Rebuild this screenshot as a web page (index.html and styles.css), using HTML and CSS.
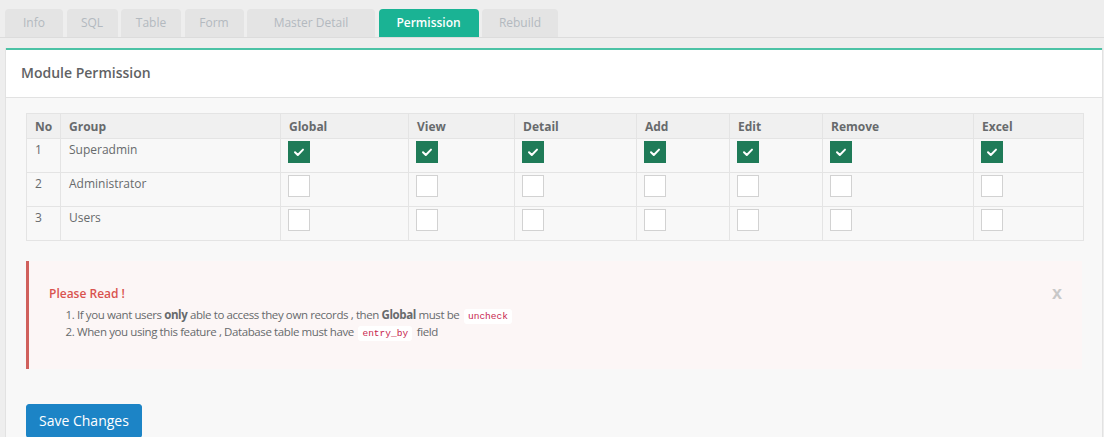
FILE: index.html
```html
<!DOCTYPE html>
<html lang="en">
<head>
<meta charset="utf-8">
<title>Module Permission</title>
<link rel="stylesheet" href="styles.css">
</head>
<body>
<ul class="tabs">
  <li class="tab t-info">Info</li>
  <li class="tab t-sql">SQL</li>
  <li class="tab t-table">Table</li>
  <li class="tab t-form">Form</li>
  <li class="tab t-md">Master Detail</li>
  <li class="tab t-perm active">Permission</li>
  <li class="tab t-rebuild">Rebuild</li>
</ul>
<div class="panel">
  <div class="panel-head">Module Permission</div>
  <div class="panel-body">
    <table class="perm">
      <colgroup>
        <col class="c-no"><col class="c-group"><col class="c-global"><col class="c-view"><col class="c-detail"><col class="c-add"><col class="c-edit"><col class="c-remove"><col class="c-excel">
      </colgroup>
      <thead>
        <tr><th>No</th><th>Group</th><th>Global</th><th>View</th><th>Detail</th><th>Add</th><th>Edit</th><th>Remove</th><th>Excel</th></tr>
      </thead>
      <tbody>
        <tr>
          <td>1</td><td>Superadmin</td>
          <td class="cb"><span class="box on"><svg viewBox="0 0 22 22" width="22" height="22"><path d="M7 11.2 L9.8 14 L15 8.6" fill="none" stroke="#fff" stroke-width="2" stroke-linecap="round" stroke-linejoin="round"/></svg></span></td>
          <td class="cb"><span class="box on"><svg viewBox="0 0 22 22" width="22" height="22"><path d="M7 11.2 L9.8 14 L15 8.6" fill="none" stroke="#fff" stroke-width="2" stroke-linecap="round" stroke-linejoin="round"/></svg></span></td>
          <td class="cb"><span class="box on"><svg viewBox="0 0 22 22" width="22" height="22"><path d="M7 11.2 L9.8 14 L15 8.6" fill="none" stroke="#fff" stroke-width="2" stroke-linecap="round" stroke-linejoin="round"/></svg></span></td>
          <td class="cb"><span class="box on"><svg viewBox="0 0 22 22" width="22" height="22"><path d="M7 11.2 L9.8 14 L15 8.6" fill="none" stroke="#fff" stroke-width="2" stroke-linecap="round" stroke-linejoin="round"/></svg></span></td>
          <td class="cb"><span class="box on"><svg viewBox="0 0 22 22" width="22" height="22"><path d="M7 11.2 L9.8 14 L15 8.6" fill="none" stroke="#fff" stroke-width="2" stroke-linecap="round" stroke-linejoin="round"/></svg></span></td>
          <td class="cb"><span class="box on"><svg viewBox="0 0 22 22" width="22" height="22"><path d="M7 11.2 L9.8 14 L15 8.6" fill="none" stroke="#fff" stroke-width="2" stroke-linecap="round" stroke-linejoin="round"/></svg></span></td>
          <td class="cb"><span class="box on"><svg viewBox="0 0 22 22" width="22" height="22"><path d="M7 11.2 L9.8 14 L15 8.6" fill="none" stroke="#fff" stroke-width="2" stroke-linecap="round" stroke-linejoin="round"/></svg></span></td>
        </tr>
        <tr>
          <td>2</td><td>Administrator</td>
          <td class="cb"><span class="box"></span></td>
          <td class="cb"><span class="box"></span></td>
          <td class="cb"><span class="box"></span></td>
          <td class="cb"><span class="box"></span></td>
          <td class="cb"><span class="box"></span></td>
          <td class="cb"><span class="box"></span></td>
          <td class="cb"><span class="box"></span></td>
        </tr>
        <tr>
          <td>3</td><td>Users</td>
          <td class="cb"><span class="box"></span></td>
          <td class="cb"><span class="box"></span></td>
          <td class="cb"><span class="box"></span></td>
          <td class="cb"><span class="box"></span></td>
          <td class="cb"><span class="box"></span></td>
          <td class="cb"><span class="box"></span></td>
          <td class="cb"><span class="box"></span></td>
        </tr>
      </tbody>
    </table>

    <div class="alert">
      <span class="close">x</span>
      <div class="alert-title">Please Read !</div>
      <ol class="alert-list">
        <li>If you want users <b>only</b> able to access they own records , then <b>Global</b> must be <code>uncheck</code></li>
        <li>When you using this feature , Database table must have <code>entry_by</code> field</li>
      </ol>
    </div>

    <button class="btn" type="button">Save Changes</button>
  </div>
</div>
</body>
</html>
```

FILE: styles.css
```css
html, body {
  margin: 0;
  padding: 0;
  background: #eeeeee;
  font-family: "Open Sans", "Liberation Sans", sans-serif;
  color: #676a6c;
  overflow: hidden;
}

.tabs {
  list-style: none;
  margin: 0;
  padding: 9px 0 0 5px;
  display: flex;
  gap: 3.5px;
  border-bottom: 1px solid #dcdcdc;
}

.tab {
  height: 28px;
  line-height: 28px;
  text-align: center;
  font-size: 12px;
  color: #b3b9bf;
  background: #e4e4e4;
  border-radius: 4px 4px 0 0;
}

.t-info { width: 58px; }
.t-sql { width: 51px; }
.t-table { width: 60px; }
.t-form { width: 59px; }
.t-md { width: 128px; }
.t-perm { width: 100px; }
.t-rebuild { width: 76px; }

.tab.active {
  background: #1ab394;
  color: #ffffff;
  font-weight: 600;
}

.panel {
  margin: 10px 1px 0 5px;
  border-left: 1px solid #e2e2e2;
  border-right: 1px solid #e2e2e2;
}

.panel-head {
  background: #ffffff;
  border-top: 2px solid #4cc2a5;
  border-bottom: 1px solid #e2e2e2;
  height: 47px;
  line-height: 46px;
  padding-left: 15px;
  font-size: 14px;
  font-weight: 600;
  color: #5f6264;
}

.panel-body {
  background: #f8f8f8;
  padding: 15px 20px 20px 20px;
  min-height: 330px;
}

.perm {
  width: 1057px;
  border-collapse: collapse;
  table-layout: fixed;
  font-size: 12px;
  border: 1px solid #e4e4e4;
}

.c-no { width: 34px; }
.c-group { width: 220px; }
.c-global { width: 128px; }
.c-view { width: 106px; }
.c-detail { width: 122px; }
.c-add { width: 93px; }
.c-edit { width: 93px; }
.c-remove { width: 151px; }
.c-excel { width: 110px; }

.perm th {
  background: #f0f0f0;
  text-align: left;
  font-weight: 700;
  color: #676a6c;
  height: 24px;
  padding: 0 8px;
  border: 1px solid #e4e4e4;
}

.perm td {
  padding: 2px 8px 14px 8px;
  line-height: 17px;
  border: 1px solid #e4e4e4;
  vertical-align: top;
  color: #676a6c;
}

.perm td.cb {
  padding: 2px 8px 9px 7px;
}

.box {
  display: block;
  width: 20px;
  height: 20px;
  border: 1px solid #d2d2d2;
  background: #ffffff;
}

.box.on {
  width: 22px;
  height: 22px;
  border: none;
  background: #1f7b58;
}

.box svg {
  display: block;
}

.alert {
  position: relative;
  margin-top: 20px;
  background: #fcf6f6;
  border-left: 3px solid #d0605c;
  padding: 24px 20px 29px 20px;
  font-size: 12px;
  line-height: 17px;
}

.alert-title {
  color: #d9534f;
  font-weight: 600;
}

.alert-list {
  margin: 4px 0 0 0;
  padding-left: 28px;
  color: #676a6c;
  font-size: 11.5px;
  letter-spacing: -0.4px;
}

.alert-list li {
  height: 17px;
  line-height: 17px;
}

.alert-list b {
  font-weight: 700;
}

.alert code {
  font-family: "Liberation Mono", "DejaVu Sans Mono", monospace;
  font-size: 9.5px;
  line-height: 1;
  letter-spacing: 0;
  color: #c7254e;
  background: #ffffff;
  padding: 2px 4px;
  border-radius: 3px;
  margin: 0 2px;
}

.close {
  position: absolute;
  right: 20px;
  top: 22px;
  font-size: 18px;
  font-weight: 700;
  color: #c8c8c8;
  font-family: "Liberation Sans", sans-serif;
  line-height: 20px;
}

.btn {
  display: block;
  margin-top: 35px;
  background: #1c84c6;
  border: 1px solid #1c84c6;
  color: #ffffff;
  border-radius: 3px;
  font-family: "Open Sans", "Liberation Sans", sans-serif;
  font-size: 14px;
  line-height: 20px;
  padding: 6px 12px;
}
```
